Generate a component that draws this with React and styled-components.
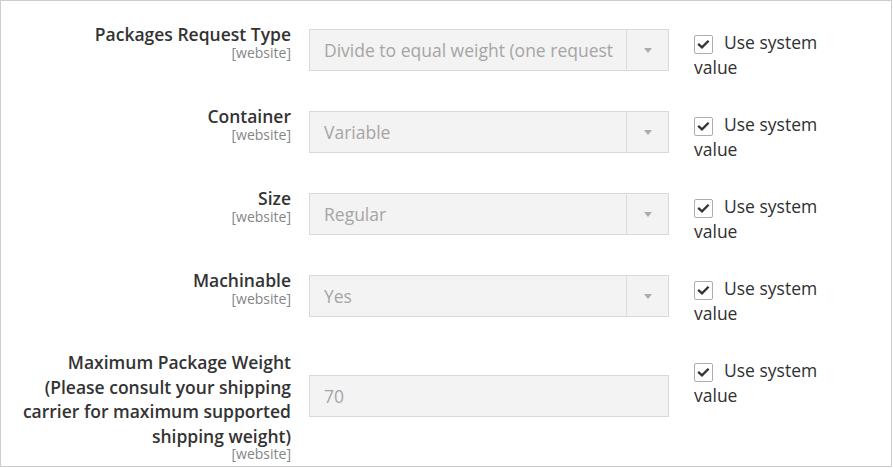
import React from 'react';
import styled, { createGlobalStyle } from 'styled-components';

const GlobalStyle = createGlobalStyle`
  body {
    margin: 0;
    background: #fff;
    font-family: "Open Sans", "Liberation Sans", sans-serif;
  }
`;

const fields = [
  { label: 'Packages Request Type', type: 'select', value: 'Divide to equal weight (one request)' },
  { label: 'Container', type: 'select', value: 'Variable' },
  { label: 'Size', type: 'select', value: 'Regular' },
  { label: 'Machinable', type: 'select', value: 'Yes' },
  {
    label: 'Maximum Package Weight (Please consult your shipping carrier for maximum supported shipping weight)',
    type: 'input',
    value: '70',
    offset: 25,
  },
];

const Frame = styled.div`
  box-sizing: border-box;
  width: 892px;
  height: 467px;
  border: 1px solid #cdcdcd;
  padding-top: 21px;
  display: flex;
  flex-direction: column;
  gap: 25px;
`;

const Row = styled.div`
  display: grid;
  grid-template-columns: 290px 360px 150px;
  column-gap: 18px;
  align-items: start;

  & > :last-child {
    margin-left: 7px;
  }
`;

const LabelCell = styled.div`
  display: flex;
  flex-direction: column;
  align-items: flex-end;
  text-align: right;
`;

const LabelText = styled.span`
  max-width: 276px;
  font-size: 17.5px;
  font-weight: 600;
  line-height: 24.5px;
  color: #333;
`;

const Scope = styled.span`
  font-size: 14px;
  line-height: 12px;
  color: #858585;
`;

const Control = styled.div`
  box-sizing: border-box;
  margin-top: ${(p) => p.$offset}px;
  height: 42px;
  display: flex;
  background: #f3f3f3;
  border: 1px solid #d9d9d9;
`;

const ControlValue = styled.div`
  flex: 1;
  min-width: 0;
  margin-right: 13px;
  padding-left: 14px;
  overflow: hidden;
  white-space: nowrap;
  font-size: 17.5px;
  line-height: 40px;
  color: #a5a5a5;
`;

const ArrowBox = styled.div`
  width: 41px;
  flex: none;
  border-left: 1px solid #dcdcdc;
  display: flex;
  align-items: center;
  justify-content: center;

  &::after {
    content: '';
    margin-top: 1px;
    border-left: 4px solid transparent;
    border-right: 4px solid transparent;
    border-top: 5px solid #acacac;
  }
`;

const UseDefault = styled.label`
  margin-top: 8px;
  font-size: 17.5px;
  line-height: 24.5px;
  color: #303030;
`;

const CheckBox = styled.span`
  box-sizing: border-box;
  display: inline-block;
  width: 19px;
  height: 19px;
  margin-right: 11px;
  vertical-align: -5px;
  border: 1px solid #adadad;
  border-radius: 2px;
  background: #fff;

  svg {
    display: block;
  }
`;

const Check = () => (
  <CheckBox>
    <svg width="17" height="17" viewBox="0 0 17 17">
      <polyline
        points="4,8.6 7,11.4 12.8,5.6"
        fill="none"
        stroke="#333"
        strokeWidth="2.3"
        strokeLinecap="square"
      />
    </svg>
  </CheckBox>
);

const Field = ({ label, type, value, offset = 7 }) => (
  <Row>
    <LabelCell>
      <LabelText>{label}</LabelText>
      <Scope>[website]</Scope>
    </LabelCell>
    <Control $offset={offset}>
      <ControlValue>{value}</ControlValue>
      {type === 'select' && <ArrowBox />}
    </Control>
    <UseDefault>
      <Check />
      <span>Use system value</span>
    </UseDefault>
  </Row>
);

export default function App() {
  return (
    <>
      <GlobalStyle />
      <Frame>
        {fields.map((f) => (
          <Field key={f.label} {...f} />
        ))}
      </Frame>
    </>
  );
}
